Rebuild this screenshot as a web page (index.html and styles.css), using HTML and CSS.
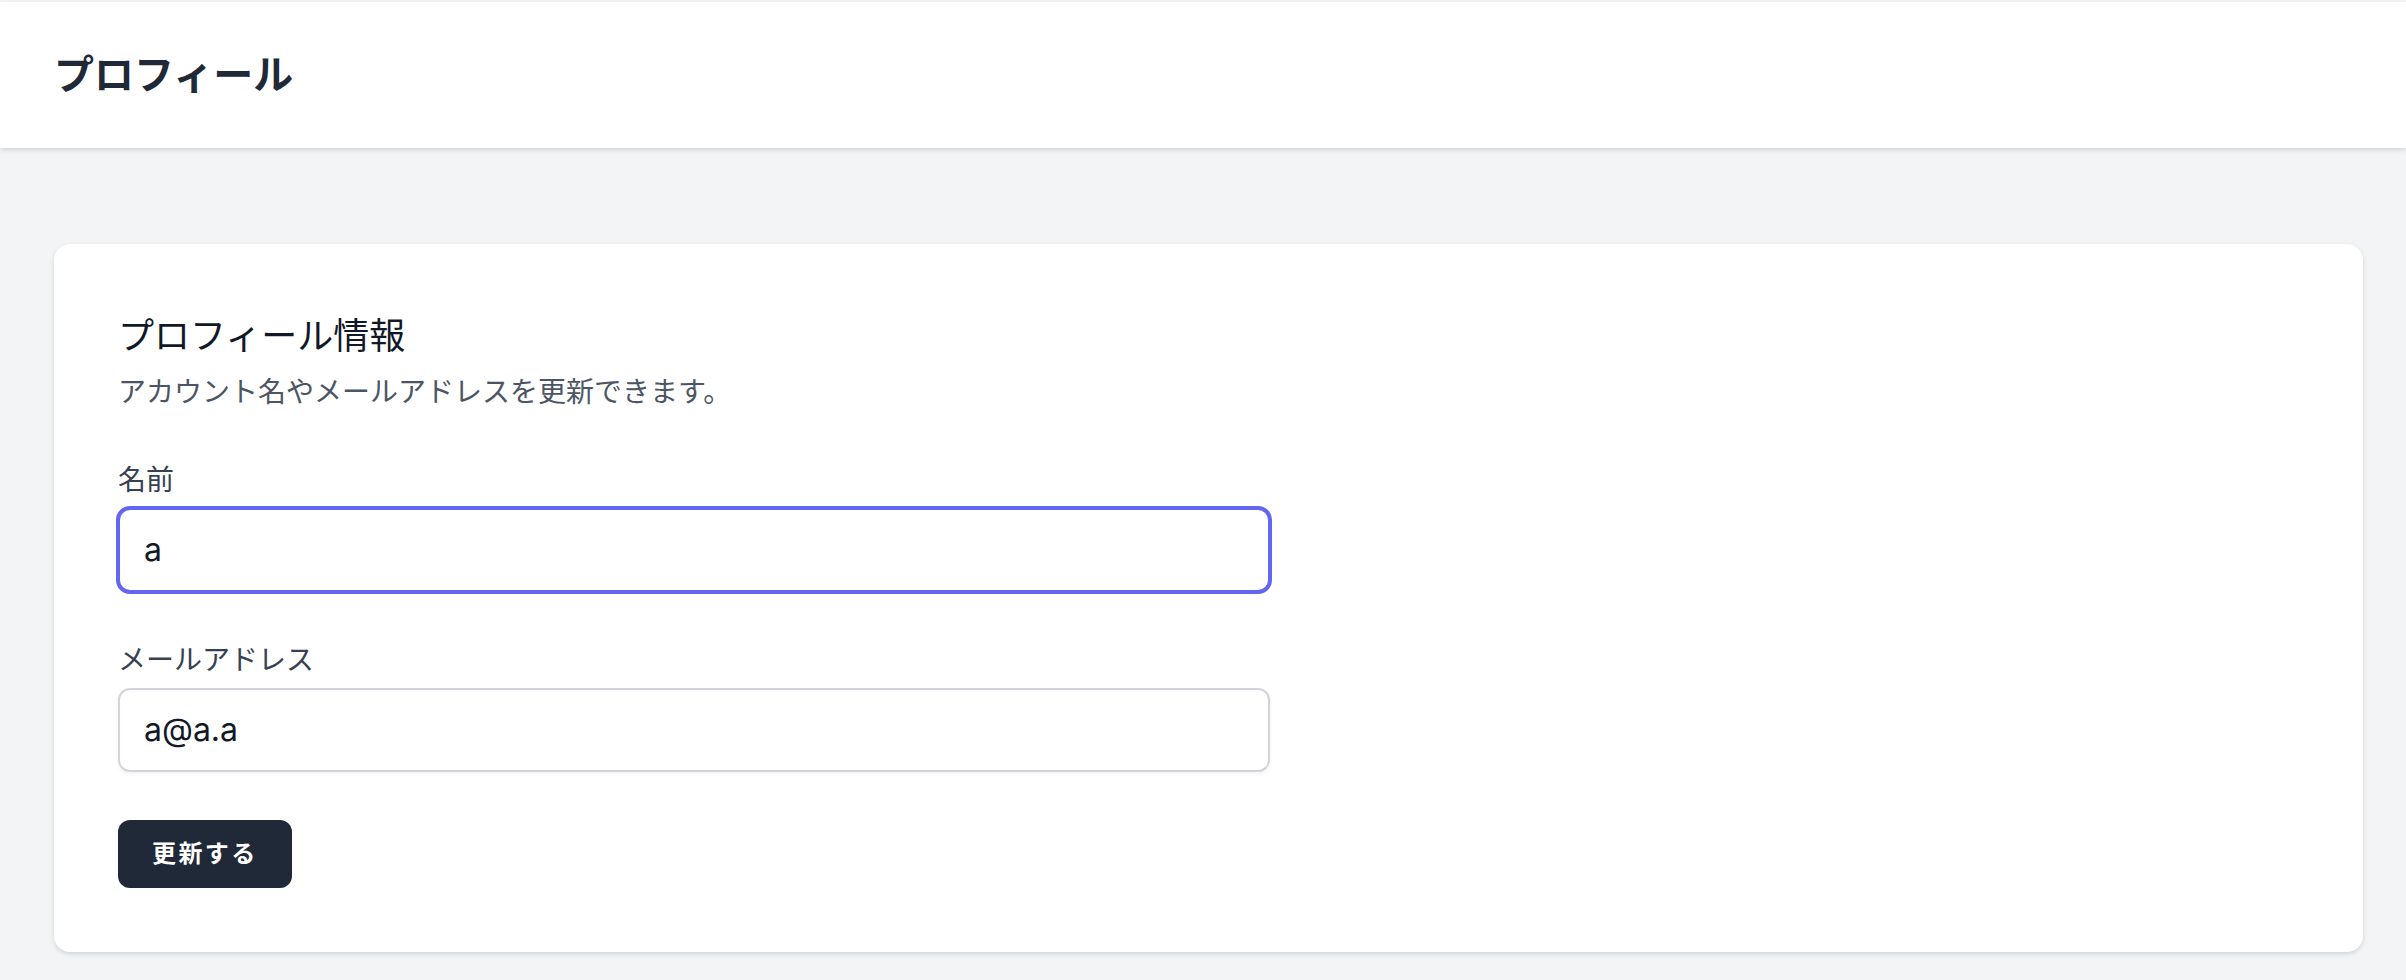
FILE: index.html
```html
<!DOCTYPE html>
<html lang="ja">
<head>
<meta charset="utf-8">
<title>プロフィール</title>
<link rel="stylesheet" href="styles.css">
</head>
<body>
<div class="nav-edge"></div>
<header class="page-header">
  <div class="container">
    <h2 class="page-title">プロフィール</h2>
  </div>
</header>
<main class="main">
  <div class="container">
    <section class="card">
      <h3 class="card-title">プロフィール情報</h3>
      <p class="card-desc">アカウント名やメールアドレスを更新できます。</p>
      <form class="form">
        <div class="field">
          <label class="label" for="name">名前</label>
          <input class="input input-focus" id="name" type="text" value="a">
        </div>
        <div class="field">
          <label class="label" for="email">メールアドレス</label>
          <input class="input" id="email" type="email" value="a@a.a">
        </div>
        <div class="actions">
          <button class="btn" type="button">更新する</button>
        </div>
      </form>
    </section>
  </div>
</main>
</body>
</html>
```
FILE: styles.css
```css
* { box-sizing: border-box; }
html, body { margin: 0; padding: 0; }
body {
  background: #f3f4f6;
  font-family: "Inter", "Noto Sans CJK JP", sans-serif;
  color: #111827;
}
.nav-edge { height: 2px; background: #f3f4f6; }
.container { padding: 0 43px 0 54px; }
.page-header {
  background: #fff;
  box-shadow: 0 2px 6px 0 rgba(0,0,0,0.1), 0 2px 4px -2px rgba(0,0,0,0.1);
  padding: 48px 0;
  position: relative;
}
.page-title {
  margin: 0;
  font-size: 40px;
  line-height: 50px;
  font-weight: 600;
  color: #1f2937;
}
.main { padding: 96px 0 26px; }
.card {
  background: #fff;
  border-radius: 16px;
  box-shadow: 0 2px 6px 0 rgba(0,0,0,0.1), 0 2px 4px -2px rgba(0,0,0,0.1);
  padding: 64px;
}
.card-title {
  margin: 0;
  font-size: 36px;
  line-height: 56px;
  font-weight: 400;
  color: #111827;
}
.card-desc {
  margin: 8px 0 0;
  font-size: 28px;
  line-height: 40px;
  color: #4b5563;
}
.form {
  margin-top: 48px;
  display: flex;
  flex-direction: column;
  gap: 48px;
  max-width: 1152px;
}
.field { display: flex; flex-direction: column; }
.label {
  font-size: 28px;
  line-height: 40px;
  font-weight: 400;
  color: #374151;
}
.input {
  margin-top: 8px;
  width: 100%;
  font-family: "Inter", "Noto Sans CJK JP", sans-serif;
  font-size: 32px;
  line-height: 48px;
  padding: 16px 24px;
  border: 2px solid #d1d5db;
  border-radius: 12px;
  box-shadow: 0 2px 4px 0 rgba(0,0,0,0.05);
  color: #111827;
  background: #fff;
  outline: none;
}
.input-focus {
  border-color: #6366f1;
  box-shadow: 0 0 0 2px #6366f1;
}
.actions { display: flex; align-items: center; gap: 32px; }
.btn {
  display: inline-flex;
  align-items: center;
  padding: 16px 32px;
  background: #1f2937;
  border: 2px solid transparent;
  border-radius: 12px;
  font-family: "Inter", "Noto Sans CJK JP", sans-serif;
  font-weight: 600;
  font-size: 24px;
  line-height: 32px;
  letter-spacing: 2.4px;
  color: #fff;
  text-transform: uppercase;
  cursor: pointer;
}
```
